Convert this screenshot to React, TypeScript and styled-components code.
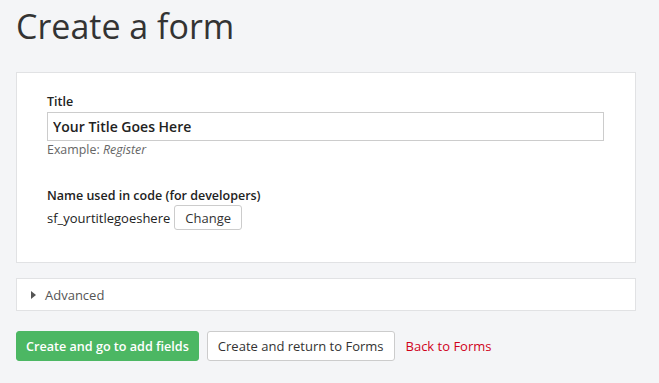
import React from "react";
import styled, { createGlobalStyle } from "styled-components";

const Global = createGlobalStyle`
  html, body { margin: 0; padding: 0; background: #f4f5f7; }
  body { font-family: "Open Sans", "Noto Sans", sans-serif; color: #333; }
  * { box-sizing: border-box; }
`;

const Page = styled.div`
  padding: 0 23px 0 16px;
  display: flex;
  flex-direction: column;
`;

const Heading = styled.h1`
  margin: 0;
  padding-top: 1px;
  height: 72px;
  font-size: 34px;
  font-weight: 400;
  line-height: 50px;
  color: #333;
`;

const Panel = styled.section`
  background: #fff;
  border: 1px solid #e1e2e4;
  height: 191px;
  padding: 20px 30px 0 30px;
`;

const Field = styled.div<{ $gap?: number }>`
  display: flex;
  flex-direction: column;
  margin-top: ${(p) => p.$gap ?? 0}px;
`;

const Label = styled.label`
  font-size: 12.5px;
  font-weight: 600;
  line-height: 18px;
  color: #222;
`;

const TextInput = styled.input`
  width: 557px;
  height: 29px;
  border: 1px solid #ccc;
  padding: 0 5px;
  font-family: inherit;
  font-size: 14px;
  font-weight: 600;
  color: #222;
  outline: none;
  margin-top: 1px;
`;

const Hint = styled.div`
  font-size: 12.4px;
  line-height: 18px;
  color: #666;
  em { font-style: italic; }
`;

const CodeRow = styled.div`
  display: flex;
  align-items: center;
  gap: 4px;
  font-size: 13px;
  color: #222;
`;

const SmallButton = styled.button`
  height: 25px;
  padding: 0 10px;
  border: 1px solid #ccc;
  border-radius: 3px;
  background: #fff;
  font-family: inherit;
  font-size: 13px;
  color: #333;
`;

const Collapsible = styled.div`
  margin-top: 15px;
  background: #fff;
  border: 1px solid #e1e2e4;
  height: 33px;
  display: flex;
  align-items: center;
  padding-left: 14px;
  gap: 9px;
  font-size: 13px;
  color: #555;
`;

const Caret = styled.span`
  width: 0;
  height: 0;
  border-top: 4.5px solid transparent;
  border-bottom: 4.5px solid transparent;
  border-left: 5px solid #555;
`;

const Actions = styled.div`
  margin-top: 20px;
  display: flex;
  align-items: center;
  gap: 8px;
`;

const Button = styled.button<{ $primary?: boolean }>`
  height: 30px;
  padding: 0 ${(p) => (p.$primary ? 9 : 10)}px;
  border-radius: 3px;
  font-family: inherit;
  font-size: ${(p) => (p.$primary ? 12.6 : 13)}px;
  cursor: pointer;
  border: 1px solid ${(p) => (p.$primary ? "#4cb763" : "#ccc")};
  background: ${(p) => (p.$primary ? "#4cb763" : "#fff")};
  color: ${(p) => (p.$primary ? "#fff" : "#333")};
  font-weight: ${(p) => (p.$primary ? 600 : 400)};
`;

const LinkText = styled.a`
  margin-left: 3px;
  font-size: 13px;
  color: #d0021b;
  text-decoration: none;
`;

export default function App() {
  return (
    <>
      <Global />
      <Page>
        <Heading>Create a form</Heading>
        <Panel>
          <Field>
            <Label>Title</Label>
            <TextInput defaultValue="Your Title Goes Here" />
            <Hint>
              Example: <em>Register</em>
            </Hint>
          </Field>
          <Field $gap={28}>
            <Label>Name used in code (for developers)</Label>
            <CodeRow>
              <span>sf_yourtitlegoeshere</span>
              <SmallButton>Change</SmallButton>
            </CodeRow>
          </Field>
        </Panel>
        <Collapsible>
          <Caret />
          <span>Advanced</span>
        </Collapsible>
        <Actions>
          <Button $primary>Create and go to add fields</Button>
          <Button>Create and return to Forms</Button>
          <LinkText href="#">Back to Forms</LinkText>
        </Actions>
      </Page>
    </>
  );
}
